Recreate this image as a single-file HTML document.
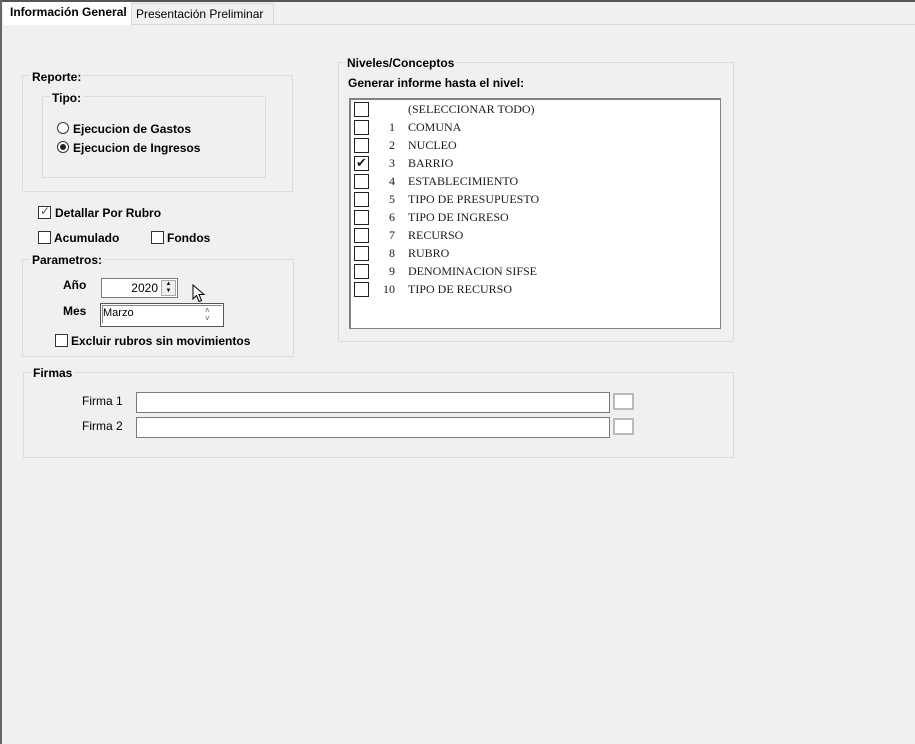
<!DOCTYPE html>
<html><head><meta charset="utf-8"><style>
*{margin:0;padding:0;box-sizing:border-box}
body{width:915px;height:744px;background:#f0f0f0;position:relative;overflow:hidden;font-family:"Liberation Sans",sans-serif;font-size:12px;color:#000}
.a{position:absolute}
.b{font-weight:bold}
.grp{position:absolute;border:1px solid #dcdcdc}
.lbl{position:absolute;background:#f0f0f0;font-weight:bold;padding:0 2px;line-height:14px}
.cb{position:absolute;width:13px;height:13px;border:1px solid #333;background:#fff}
.rd{position:absolute;width:12px;height:12px;border:1px solid #333;border-radius:50%;background:#fff}
.row{position:absolute;left:0;height:18px;width:100%;font-family:"Liberation Serif",serif;font-size:12px;color:#1a1a1a}
.row .c{position:absolute;left:3px;top:2px;width:15px;height:15px;border:1px solid #222;background:#fff}
.row .n{position:absolute;left:20px;width:24px;text-align:right;top:2px}
.row .t{position:absolute;left:57px;top:2px}
.inp{position:absolute;background:#fff;border:1px solid #7a7a7a}
</style></head><body>
<div class="a" style="left:0;top:0;width:915px;height:2px;background:#555"></div>
<div class="a" style="left:0;top:0;width:2px;height:744px;background:#666"></div>
<div class="a" style="left:2px;top:24px;width:913px;height:1px;background:#d9d9d9"></div>
<div class="a" style="left:131px;top:3px;width:143px;height:21px;border:1px solid #d9d9d9;border-bottom:none;background:#f0f0f0"></div>
<div class="a" style="left:136px;top:7px;font-size:12px">Presentación Preliminar</div>
<div class="a" style="left:3px;top:2px;width:128px;height:23px;background:#fff"></div>
<div class="a b" style="left:10px;top:5px">Información General</div>

<div class="grp" style="left:22px;top:75px;width:271px;height:117px"></div>
<div class="lbl" style="left:30px;top:70px">Reporte:</div>
<div class="grp" style="left:42px;top:96px;width:224px;height:82px"></div>
<div class="lbl" style="left:50px;top:91px">Tipo:</div>
<div class="rd" style="left:57px;top:122px"></div>
<div class="a b" style="left:73px;top:122px">Ejecucion de Gastos</div>
<div class="rd" style="left:57px;top:141px"></div>
<div class="a" style="left:60px;top:144px;width:6px;height:6px;border-radius:50%;background:#222"></div>
<div class="a b" style="left:73px;top:141px">Ejecucion de Ingresos</div>

<div class="cb" style="left:38px;top:206px"></div>
<div class="a" style="left:40px;top:204px;font-size:12px;color:#555">✓</div>
<div class="a b" style="left:55px;top:206px">Detallar Por Rubro</div>
<div class="cb" style="left:38px;top:231px"></div>
<div class="a b" style="left:54px;top:231px">Acumulado</div>
<div class="cb" style="left:151px;top:231px"></div>
<div class="a b" style="left:167px;top:231px">Fondos</div>

<div class="grp" style="left:22px;top:259px;width:272px;height:98px"></div>
<div class="lbl" style="left:30px;top:253px;font-weight:bold">Parametros:</div>
<div class="a b" style="left:63px;top:278px">Año</div>
<div class="inp" style="left:101px;top:278px;width:77px;height:20px"></div>
<div class="a" style="left:130px;top:281px;width:28px;text-align:right">2020</div>
<div class="a" style="left:161px;top:280px;width:15px;height:16px;border:1px solid #aaa;background:#eee;font-size:6px;line-height:7px;text-align:center">▲<br>▼</div>
<svg class="a" style="left:192px;top:284px" width="14" height="20" viewBox="0 0 14 20"><path d="M1 1 L1 15 L4.5 11.5 L7 17.5 L9.5 16.5 L7 10.5 L12 10.5 Z" fill="#fff" stroke="#000" stroke-width="1"/></svg>
<div class="a b" style="left:63px;top:304px">Mes</div>
<div class="a" style="left:100px;top:303px;width:124px;height:24px;border:1px solid #555;background:#fff"></div>
<div class="a" style="left:102px;top:305px;width:120px;height:18px;border-top:1px solid #888;border-left:1px solid #888"></div>
<div class="a" style="left:103px;top:307px;font-size:11px">Marzo</div>
<div class="a" style="left:205px;top:307px;font-size:8px;line-height:8px;color:#555">˄<br>˅</div>
<div class="cb" style="left:55px;top:334px"></div>
<div class="a b" style="left:71px;top:334px">Excluir rubros sin movimientos</div>

<div class="grp" style="left:338px;top:62px;width:396px;height:280px"></div>
<div class="lbl" style="left:345px;top:56px">Niveles/Conceptos</div>
<div class="a b" style="left:348px;top:76px">Generar informe hasta el nivel:</div>
<div class="a" style="left:349px;top:98px;width:372px;height:231px;background:#fff;border:1px solid #828282;border-top:2px solid #828282;border-left:2px solid #828282">
<div class="row" style="top:0px"><div class="c"></div><div class="t">(SELECCIONAR TODO)</div></div>
<div class="row" style="top:18px"><div class="c"></div><div class="n">1</div><div class="t">COMUNA</div></div>
<div class="row" style="top:36px"><div class="c"></div><div class="n">2</div><div class="t">NUCLEO</div></div>
<div class="row" style="top:54px"><div class="c" style="font-size:13px;line-height:12px;text-align:center">✔</div><div class="n">3</div><div class="t">BARRIO</div></div>
<div class="row" style="top:72px"><div class="c"></div><div class="n">4</div><div class="t">ESTABLECIMIENTO</div></div>
<div class="row" style="top:90px"><div class="c"></div><div class="n">5</div><div class="t">TIPO DE PRESUPUESTO</div></div>
<div class="row" style="top:108px"><div class="c"></div><div class="n">6</div><div class="t">TIPO DE INGRESO</div></div>
<div class="row" style="top:126px"><div class="c"></div><div class="n">7</div><div class="t">RECURSO</div></div>
<div class="row" style="top:144px"><div class="c"></div><div class="n">8</div><div class="t">RUBRO</div></div>
<div class="row" style="top:162px"><div class="c"></div><div class="n">9</div><div class="t">DENOMINACION SIFSE</div></div>
<div class="row" style="top:180px"><div class="c"></div><div class="n">10</div><div class="t">TIPO DE RECURSO</div></div>
</div>

<div class="grp" style="left:23px;top:372px;width:711px;height:86px"></div>
<div class="lbl" style="left:31px;top:366px">Firmas</div>
<div class="a" style="left:82px;top:394px">Firma 1</div>
<div class="inp" style="left:136px;top:392px;width:474px;height:21px"></div>
<div class="a" style="left:613px;top:393px;width:21px;height:17px;border:2px solid #bbb;background:#fff"></div>
<div class="a" style="left:82px;top:419px">Firma 2</div>
<div class="inp" style="left:136px;top:417px;width:474px;height:21px"></div>
<div class="a" style="left:613px;top:418px;width:21px;height:17px;border:2px solid #bbb;background:#fff"></div>
</body></html>
